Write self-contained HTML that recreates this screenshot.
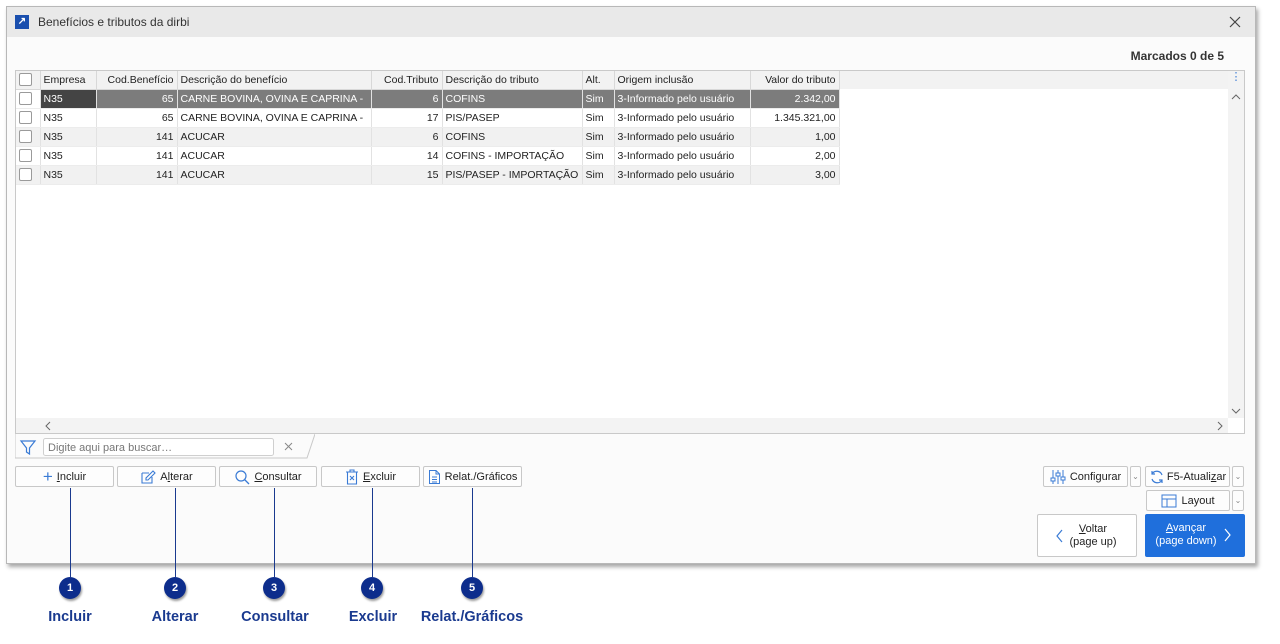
<!DOCTYPE html>
<html><head><meta charset="utf-8"><style>
*{box-sizing:border-box;margin:0;padding:0}
body{width:1280px;height:644px;background:#fff;font-family:"Liberation Sans",sans-serif;font-size:11px;color:#222;position:relative;overflow:hidden}
.a{position:absolute}
.win{left:6px;top:6px;width:1250px;height:558px;background:#fbfbfb;border:1px solid #b8b8b8;box-shadow:2px 3px 4px rgba(0,0,0,.35)}
.title{left:0;top:0;width:100%;height:30px;background:#e9e9e9}
.grid{left:15px;top:70px;width:1230px;height:364px;background:#fff;border:1px solid #c9c9c9}
table{border-collapse:collapse;position:absolute;left:0;top:0;table-layout:fixed;width:823px}
td{height:19px;border-right:1px solid #e2e2e2;border-bottom:1px solid #ececec;padding:0 3px;white-space:nowrap;overflow:hidden;font-size:10.5px}
tr.h td{height:18px;background:#f2f2f2;border-bottom:1px solid #d8d8d8;border-right:1px solid #d8d8d8}
tr.g td{background:#f1f1f1}
tr.s td{background:#7c7c7c;color:#fff}
tr.s td.d{background:#444}
.r{text-align:right}
.cb{display:inline-block;width:13px;height:13px;border:1px solid #9a9a9a;border-radius:2px;background:#fff;vertical-align:middle}
.btn{height:21px;border:1px solid #c8c8c8;border-radius:2px;background:#fdfdfd;font-size:11px;display:flex;align-items:center;justify-content:center;gap:4px;white-space:nowrap}
.ln{width:1px;background:#1a3a8f}
.cir{width:22px;height:22px;border-radius:50%;background:#0d2d8c;color:#fff;font-weight:bold;font-size:11px;text-align:center;line-height:22px;box-shadow:1px 2px 2px rgba(0,0,0,.4)}
.lab{font-weight:bold;color:#1a3a8f;font-size:14.5px;text-align:center;width:140px}
</style></head><body>
<div class="a win">
 <div class="a title">
  <div class="a" style="left:8px;top:8px;width:14px;height:14px;background:#1a4fae;color:#fff;font-size:10px;line-height:14px;text-align:center;font-weight:bold">↗</div>
  <div class="a" style="left:31px;top:8px;font-size:12px;color:#333">Benefícios e tributos da dirbi</div>
  <svg class="a" style="left:1222px;top:9px" width="12" height="12"><path d="M1 1L11 11M11 1L1 11" stroke="#444" stroke-width="1.2"/></svg>
 </div>
 <div class="a" style="right:31px;top:42px;font-weight:bold;font-size:12px;color:#333">Marcados 0 de 5</div>
</div>
<div class="a grid">
<div class="a" style="left:0;top:0;right:0;height:18px;background:#f2f2f2"></div>
<table>
<colgroup><col style="width:24px"><col style="width:56px"><col style="width:81px"><col style="width:194px"><col style="width:71px"><col style="width:140px"><col style="width:32px"><col style="width:136px"><col style="width:89px"></colgroup>
<tr class="h"><td><span class="cb"></span></td><td>Empresa</td><td class="r">Cod.Benefício</td><td>Descrição do benefício</td><td class="r">Cod.Tributo</td><td>Descrição do tributo</td><td>Alt.</td><td>Origem inclusão</td><td class="r">Valor do tributo</td></tr>
<tr class="s"><td style="background:#fff"><span class="cb"></span></td><td class="d">N35</td><td class="r">65</td><td>CARNE BOVINA, OVINA E CAPRINA -</td><td class="r">6</td><td>COFINS</td><td>Sim</td><td>3-Informado pelo usuário</td><td class="r">2.342,00</td></tr>
<tr><td><span class="cb"></span></td><td>N35</td><td class="r">65</td><td>CARNE BOVINA, OVINA E CAPRINA -</td><td class="r">17</td><td>PIS/PASEP</td><td>Sim</td><td>3-Informado pelo usuário</td><td class="r">1.345.321,00</td></tr>
<tr class="g"><td><span class="cb"></span></td><td>N35</td><td class="r">141</td><td>ACUCAR</td><td class="r">6</td><td>COFINS</td><td>Sim</td><td>3-Informado pelo usuário</td><td class="r">1,00</td></tr>
<tr><td><span class="cb"></span></td><td>N35</td><td class="r">141</td><td>ACUCAR</td><td class="r">14</td><td>COFINS - IMPORTAÇÃO</td><td>Sim</td><td>3-Informado pelo usuário</td><td class="r">2,00</td></tr>
<tr class="g"><td><span class="cb"></span></td><td>N35</td><td class="r">141</td><td>ACUCAR</td><td class="r">15</td><td>PIS/PASEP - IMPORTAÇÃO</td><td>Sim</td><td>3-Informado pelo usuário</td><td class="r">3,00</td></tr>
</table>
<div class="a" style="right:0;top:0;width:16px;height:347px;background:#f3f3f3;color:#3a7bd5;text-align:center;font-size:11px;line-height:7px;padding-top:3px">⋮</div>
<svg class="a" style="right:3px;top:22px" width="10" height="8"><path d="M1 6L5 2L9 6" fill="none" stroke="#666"/></svg>
<svg class="a" style="right:3px;top:336px" width="10" height="8"><path d="M1 2L5 6L9 2" fill="none" stroke="#666"/></svg>
<div class="a" style="left:0;top:347px;width:1212px;height:15px;background:#f3f3f3"></div>
<svg class="a" style="left:28px;top:350px" width="8" height="10"><path d="M6 1L2 5L6 9" fill="none" stroke="#666"/></svg>
<svg class="a" style="left:1200px;top:350px" width="8" height="10"><path d="M2 1L6 5L2 9" fill="none" stroke="#666"/></svg>
</div>
<svg class="a" style="left:15px;top:434px" width="300" height="25"><path d="M0 0V24H292L300 0" fill="#fbfbfb" stroke="#c9c9c9"/><path d="M6 7H20L14.5 14V20L11.5 18V14Z" fill="none" stroke="#3a7bd5" stroke-width="1.2"/><rect x="28.5" y="4.5" width="230" height="17" rx="2" fill="#fff" stroke="#cfcfcf"/><text x="33" y="17" font-family="Liberation Sans" font-size="11" fill="#777">Digite aqui para buscar…</text><path d="M270 9L277 16M277 9L270 16" stroke="#888"/></svg>
<div class="a btn" style="left:15px;top:466px;width:99px"><span style="color:#3a7bd5;font-size:17px">+</span><span><u>I</u>ncluir</span></div>
<div class="a btn" style="left:117px;top:466px;width:99px"><svg width="16" height="16"><path d="M2 4H9M2 4V14H12V8M13 2L15 4L8 11H6V9Z" fill="none" stroke="#3a7bd5" stroke-width="1.1"/></svg><span>A<u>l</u>terar</span></div>
<div class="a btn" style="left:219px;top:466px;width:98px"><svg width="16" height="16"><circle cx="7" cy="7" r="5" fill="none" stroke="#3a7bd5" stroke-width="1.2"/><path d="M10.5 10.5L15 15" stroke="#3a7bd5" stroke-width="1.3"/></svg><span><u>C</u>onsultar</span></div>
<div class="a btn" style="left:321px;top:466px;width:99px"><svg width="14" height="16"><path d="M1 3H13M5 3V1H9V3M2.5 3V15H11.5V3M5 7L9 11M9 7L5 11" fill="none" stroke="#3a7bd5" stroke-width="1.1"/></svg><span><u>E</u>xcluir</span></div>
<div class="a btn" style="left:423px;top:466px;width:99px"><svg width="13" height="16"><path d="M1.5 1.5H8L11.5 5V14.5H1.5ZM8 1.5V5H11.5M4 8H9M4 10.5H9M4 13H9" fill="none" stroke="#3a7bd5"/></svg><span>Relat./Gráficos</span></div>
<div class="a btn" style="left:1043px;top:466px;width:85px"><svg width="16" height="16"><path d="M3 1V15M8 1V15M13 1V15" stroke="#3a7bd5"/><rect x="1" y="9" width="4" height="3" fill="#fff" stroke="#3a7bd5"/><rect x="6" y="4" width="4" height="3" fill="#fff" stroke="#3a7bd5"/><rect x="11" y="8" width="4" height="3" fill="#fff" stroke="#3a7bd5"/></svg><span>Configurar</span></div>
<div class="a btn" style="left:1130px;top:466px;width:11px;font-size:8px;color:#888">⌄</div>
<div class="a btn" style="left:1145px;top:466px;width:85px;gap:2px"><svg width="16" height="16"><path d="M13 6A5.5 5.5 0 0 0 3 5M3 10A5.5 5.5 0 0 0 13 11M3 2V5H6M13 14V11H10" fill="none" stroke="#3a7bd5" stroke-width="1.2"/></svg><span>F5-Atuali<u>z</u>ar</span></div>
<div class="a btn" style="left:1232px;top:466px;width:12px;font-size:8px;color:#888">⌄</div>
<div class="a btn" style="left:1146px;top:490px;width:84px"><svg width="16" height="14"><rect x="1" y="1" width="14" height="12" fill="none" stroke="#3a7bd5"/><path d="M1 5H15M6 5V13" stroke="#3a7bd5"/></svg><span>Layout</span></div>
<div class="a btn" style="left:1232px;top:490px;width:12px;font-size:8px;color:#888">⌄</div>
<div class="a" style="left:1037px;top:514px;width:100px;height:43px;border:1px solid #c8c8c8;border-radius:2px;background:#fff;text-align:center;line-height:13px;padding-top:8px;font-size:11px"><svg class="a" style="left:18px;top:14px" width="8" height="14"><path d="M6 1L1 7L6 13" fill="none" stroke="#3a7bd5" stroke-width="1.2"/></svg><span style="margin-left:12px;display:inline-block"><u>V</u>oltar<br>(page up)</span></div>
<div class="a" style="left:1145px;top:514px;width:100px;height:43px;border-radius:2px;background:#1f6fdc;color:#fff;text-align:center;line-height:13px;padding-top:8px;font-size:11px"><span style="margin-right:18px;display:inline-block"><u>A</u>vançar<br>(page down)</span><svg class="a" style="right:14px;top:14px" width="8" height="14"><path d="M2 1L7 7L2 13" fill="none" stroke="#fff" stroke-width="1.2"/></svg></div>
<div class="a ln" style="left:70px;top:488px;height:89px"></div>
<div class="a ln" style="left:175px;top:488px;height:89px"></div>
<div class="a ln" style="left:274px;top:488px;height:89px"></div>
<div class="a ln" style="left:372px;top:488px;height:89px"></div>
<div class="a ln" style="left:472px;top:488px;height:89px"></div>
<div class="a cir" style="left:59px;top:577px">1</div>
<div class="a cir" style="left:164px;top:577px">2</div>
<div class="a cir" style="left:263px;top:577px">3</div>
<div class="a cir" style="left:361px;top:577px">4</div>
<div class="a cir" style="left:461px;top:577px">5</div>
<div class="a lab" style="left:0;top:609px">Incluir</div>
<div class="a lab" style="left:105px;top:609px">Alterar</div>
<div class="a lab" style="left:205px;top:609px">Consultar</div>
<div class="a lab" style="left:303px;top:609px">Excluir</div>
<div class="a lab" style="left:402px;top:609px">Relat./Gráficos</div>
</body></html>
